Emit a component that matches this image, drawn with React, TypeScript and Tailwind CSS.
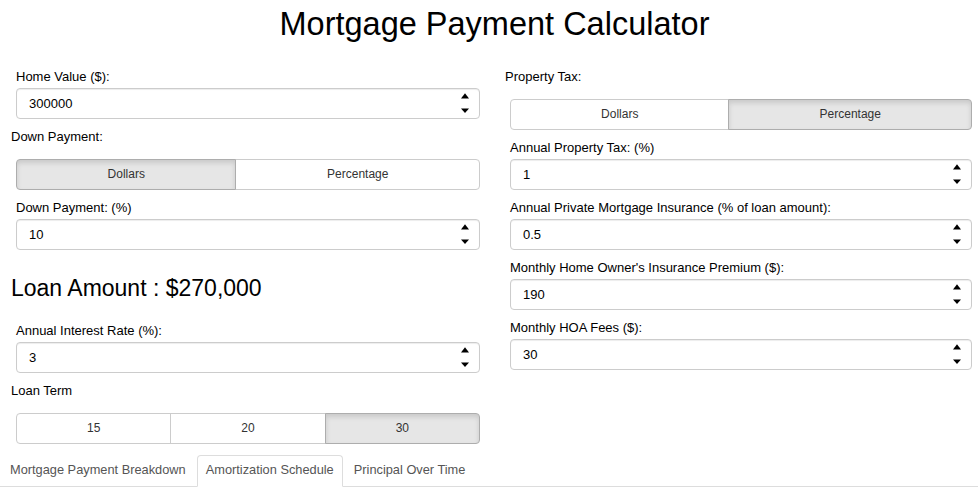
import React from "react";

const font = { fontFamily: '"Liberation Sans", Arial, sans-serif' };

function Spinner() {
  return (
    <svg
      className="absolute right-[10px] top-[4px] pointer-events-none"
      width="10"
      height="22"
      viewBox="0 0 10 22"
    >
      <path d="M1 6.5 L5 1.2 L9 6.5 Z" fill="#000" />
      <path d="M1 16.4 L9 16.4 L5 21 Z" fill="#000" />
    </svg>
  );
}

function NumInput({ value }: { value: string }) {
  return (
    <div className="relative h-[31px]">
      <input
        type="text"
        defaultValue={value}
        readOnly
        className="box-border w-full h-[31px] border border-[#ccc] rounded-[4px] bg-white pl-[12px] pr-[30px] text-[13px] leading-[16px] text-black outline-none shadow-[inset_0_1px_1px_rgba(0,0,0,0.075)]"
        style={font}
      />
      <Spinner />
    </div>
  );
}

function Field({ label, value, last }: { label: string; value: string; last?: boolean }) {
  return (
    <div className={`pl-[5px] ${last ? "" : "mb-[10px]"}`}>
      <div className="h-[16px] leading-[16px] text-[13px] text-black mb-[3px] whitespace-nowrap">{label}</div>
      <NumInput value={value} />
    </div>
  );
}

function BtnGroup({ options, active, equal }: { options: string[]; active: number; equal?: boolean }) {
  return (
    <div className="flex h-[31px] ml-[5px]">
      {options.map((o, i) => {
        const isActive = i === active;
        const first = i === 0;
        const lastOne = i === options.length - 1;
        return (
          <div
            key={o}
            className={[
              equal ? "flex-1" : "flex-auto",
              "box-border h-[31px] border px-[10px] text-center text-[12px] leading-[16px] pt-[6px] text-[#333] whitespace-nowrap",
              first ? "rounded-l-[4px]" : "-ml-px",
              lastOne ? "rounded-r-[4px]" : "",
              isActive
                ? "bg-[#e6e6e6] border-[#adadad] shadow-[inset_0_3px_5px_rgba(0,0,0,0.125)] relative z-10"
                : "bg-white border-[#ccc]",
            ].join(" ")}
          >
            {o}
          </div>
        );
      })}
    </div>
  );
}

function PlainLabel({ children }: { children: React.ReactNode }) {
  return <div className="h-[16px] leading-[16px] text-[13px] text-black whitespace-nowrap">{children}</div>;
}

export default function App() {
  return (
    <div className="w-[978px] h-[490px] bg-white overflow-hidden" style={font}>
      <div className="h-[69px] pt-[4px] pl-[11px] box-border">
        <h1 className="text-center text-[32.5px] leading-[40px] font-normal text-black">
          Mortgage Payment Calculator
        </h1>
      </div>

      <div className="grid grid-cols-[469px_467px] gap-x-[25px] pl-[11px]">
        {/* left column */}
        <div className="flex flex-col">
          <Field label="Home Value ($):" value="300000" />
          <PlainLabel>Down Payment:</PlainLabel>
          <div className="mt-[14px] mb-[10px]">
            <BtnGroup options={["Dollars", "Percentage"]} active={0} />
          </div>
          <Field label="Down Payment: (%)" value="10" last />
          <div className="mt-[24px] h-[28px] leading-[28px] text-[23px] text-black whitespace-nowrap">
            Loan Amount : $270,000
          </div>
          <div className="mt-[21px]">
            <Field label="Annual Interest Rate (%):" value="3" />
          </div>
          <PlainLabel>Loan Term</PlainLabel>
          <div className="mt-[14px]">
            <BtnGroup options={["15", "20", "30"]} active={2} equal />
          </div>
        </div>

        {/* right column */}
        <div className="flex flex-col">
          <PlainLabel>Property Tax:</PlainLabel>
          <div className="mt-[14px] mb-[10px]">
            <BtnGroup options={["Dollars", "Percentage"]} active={1} />
          </div>
          <Field label="Annual Property Tax: (%)" value="1" />
          <Field label="Annual Private Mortgage Insurance (% of loan amount):" value="0.5" />
          <Field label="Monthly Home Owner's Insurance Premium ($):" value="190" />
          <Field label="Monthly HOA Fees ($):" value="30" />
        </div>
      </div>

      <div className="mt-[11px] flex border-b border-[#ddd] pl-px">
        {[
          { t: "Mortgage Payment Breakdown", a: false },
          { t: "Amortization Schedule", a: true },
          { t: "Principal Over Time", a: false },
        ].map((tab) => (
          <div
            key={tab.t}
            className={[
              "-mb-px mr-[2px] px-[8px] pt-[6px] pb-[8px] text-[12.8px] leading-[16px] text-[#555] border rounded-t-[4px] whitespace-nowrap",
              tab.a ? "bg-white border-[#ddd] border-b-white" : "border-transparent",
            ].join(" ")}
          >
            {tab.t}
          </div>
        ))}
      </div>
    </div>
  );
}
